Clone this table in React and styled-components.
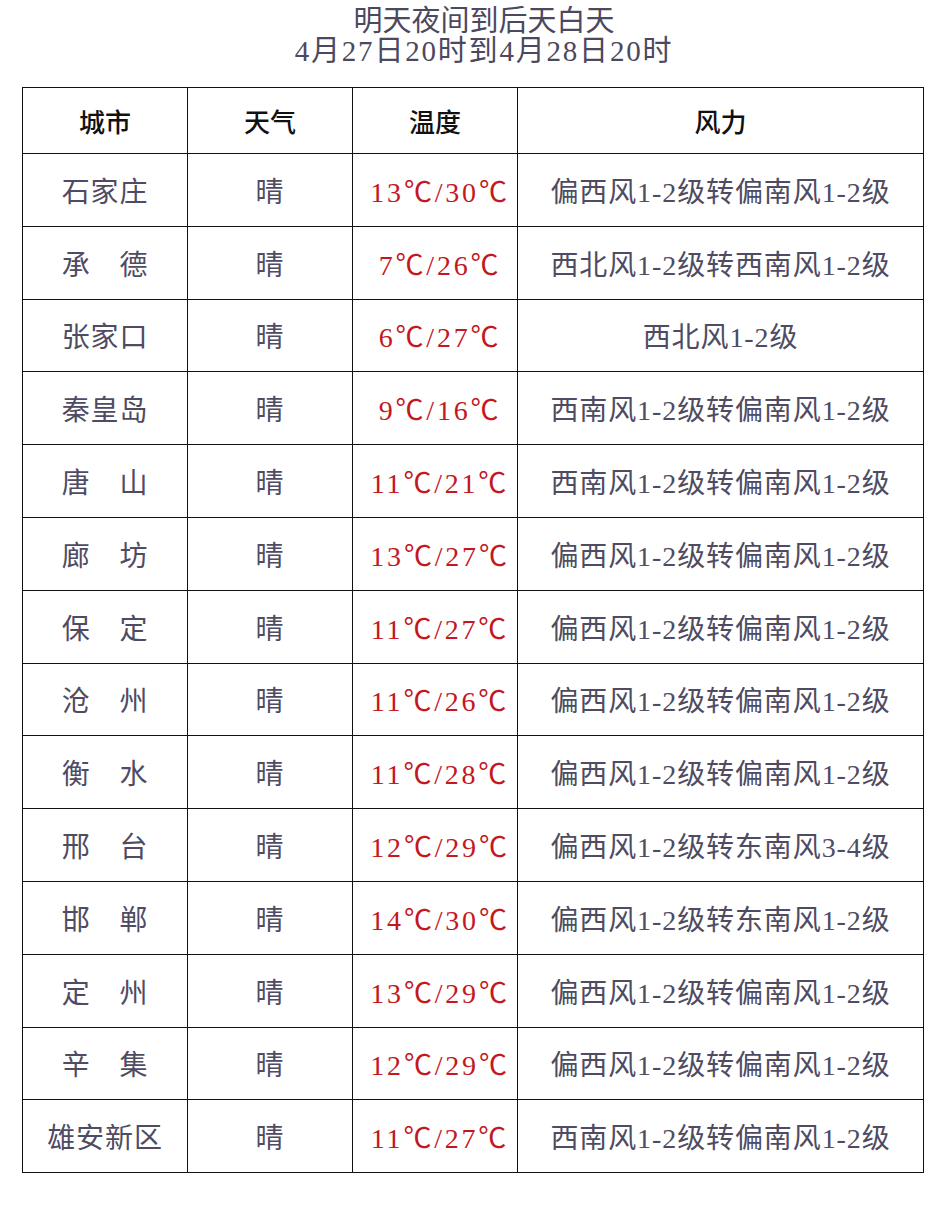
import React from "react";
import styled, { createGlobalStyle } from "styled-components";

const GlobalStyle = createGlobalStyle`
  html, body {
    margin: 0;
    padding: 0;
    background: #fff;
  }
  body {
    font-family: "Liberation Serif", "Noto Sans CJK SC", serif;
  }
`;

const Page = styled.div`
  width: 942px;
  height: 1218px;
  background: #fff;
  overflow: hidden;
`;

const Title = styled.h1`
  margin: 0;
  padding: 6px 0 0 26px;
  text-align: center;
  font-size: 29px;
  font-weight: 400;
  line-height: 30px;
  color: #4b4860;
  height: 87px;
  box-sizing: border-box;
`;

const TitleLine = styled.div`
  letter-spacing: ${p => p.spacing || 0}px;
`;

const Table = styled.table`
  margin-left: 22px;
  width: 901px;
  border-collapse: collapse;
  table-layout: fixed;
  border: 1.5px solid #111;
`;

const Col = styled.col`
  width: ${p => p.w}px;
`;

const HeadCell = styled.th`
  height: 65px;
  padding: 0;
  border: 1px solid #111;
  font-size: 26px;
  font-weight: 500;
  color: #111;
  text-align: center;
  vertical-align: middle;
`;

const Cell = styled.td`
  height: 71.8px;
  padding: 0 0 0 ${p => (p.hot ? 10 : 0)}px;
  border: 1px solid #111;
  font-size: 28px;
  color: ${p => (p.hot ? "#c4171e" : "#4e4b62")};
  text-align: center;
  vertical-align: middle;
  white-space: nowrap;
  letter-spacing: ${p => (p.hot ? "2.8px" : "0.9px")};
`;

const rows = [
  ["石家庄", "13℃/30℃", "偏西风1-2级转偏南风1-2级"],
  ["承　德", "7℃/26℃", "西北风1-2级转西南风1-2级"],
  ["张家口", "6℃/27℃", "西北风1-2级"],
  ["秦皇岛", "9℃/16℃", "西南风1-2级转偏南风1-2级"],
  ["唐　山", "11℃/21℃", "西南风1-2级转偏南风1-2级"],
  ["廊　坊", "13℃/27℃", "偏西风1-2级转偏南风1-2级"],
  ["保　定", "11℃/27℃", "偏西风1-2级转偏南风1-2级"],
  ["沧　州", "11℃/26℃", "偏西风1-2级转偏南风1-2级"],
  ["衡　水", "11℃/28℃", "偏西风1-2级转偏南风1-2级"],
  ["邢　台", "12℃/29℃", "偏西风1-2级转东南风3-4级"],
  ["邯　郸", "14℃/30℃", "偏西风1-2级转东南风1-2级"],
  ["定　州", "13℃/29℃", "偏西风1-2级转偏南风1-2级"],
  ["辛　集", "12℃/29℃", "偏西风1-2级转偏南风1-2级"],
  ["雄安新区", "11℃/27℃", "西南风1-2级转偏南风1-2级"],
];

export default function App() {
  return (
    <Page>
      <GlobalStyle />
      <Title>
        <TitleLine>明天夜间到后天白天</TitleLine>
        <TitleLine spacing={1.8}>4月27日20时到4月28日20时</TitleLine>
      </Title>
      <Table>
        <colgroup>
          <Col w={165} />
          <Col w={165} />
          <Col w={165} />
          <Col w={406} />
        </colgroup>
        <thead>
          <tr>
            <HeadCell>城市</HeadCell>
            <HeadCell>天气</HeadCell>
            <HeadCell>温度</HeadCell>
            <HeadCell>风力</HeadCell>
          </tr>
        </thead>
        <tbody>
          {rows.map(([city, temp, wind]) => (
            <tr key={city}>
              <Cell>{city}</Cell>
              <Cell>晴</Cell>
              <Cell hot>{temp}</Cell>
              <Cell>{wind}</Cell>
            </tr>
          ))}
        </tbody>
      </Table>
    </Page>
  );
}
